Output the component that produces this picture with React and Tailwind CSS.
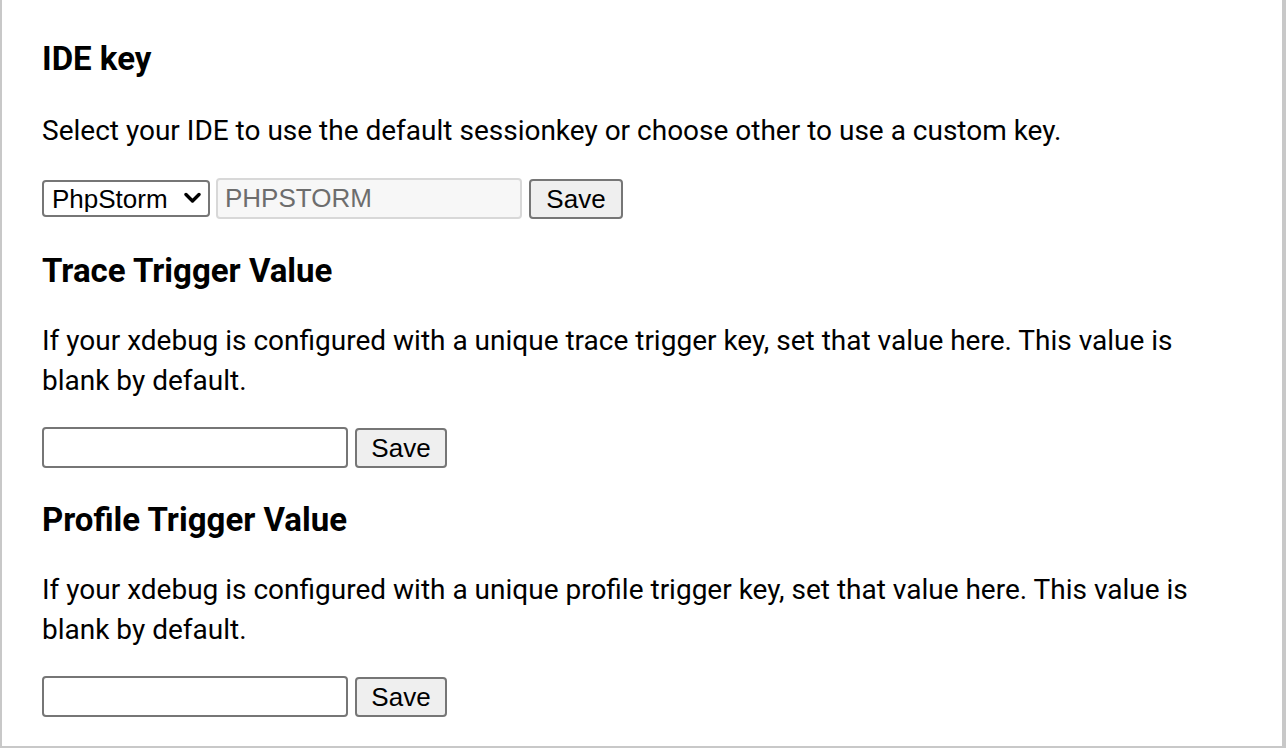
import React, { useState } from "react";

const widget = { fontFamily: '"Liberation Sans", Arial, sans-serif' };

function SaveButton({ w = "w-[94px]" }) {
  return (
    <button
      style={widget}
      className={`${w} h-[40px] rounded-[4px] border-2 border-[#767676] bg-[#efefef] text-[26px] leading-none text-black`}
    >
      Save
    </button>
  );
}

function Section({ title, children, first }) {
  return (
    <section className={first ? "" : "mt-[32px]"}>
      <h3 className="text-[33px] leading-[40px] font-bold text-black">{title}</h3>
      {children}
    </section>
  );
}

export default function App() {
  const [ide, setIde] = useState("PHPSTORM");
  const [trace, setTrace] = useState("");
  const [profile, setProfile] = useState("");

  return (
    <div
      className="min-h-screen bg-white border-l-2 border-r-4 border-b-2 border-[#c8c8c8] pl-[40px] pr-[70px] pt-[39px] text-black"
      style={{ fontFamily: "Roboto, Arial, sans-serif" }}
    >
      <Section title="IDE key" first>
        <p className="mt-[32px] text-[28px] leading-[40px]">
          Select your IDE to use the default sessionkey or choose other to use a custom key.
        </p>
        <div className="mt-[27px] flex items-center">
          <div className="relative">
            <select
              value={ide}
              onChange={(e) => setIde(e.target.value)}
              style={widget}
              className="appearance-none w-[168px] h-[37px] rounded-[4px] border-2 border-[#767676] bg-white pl-[8px] text-[26px] leading-none text-black"
            >
              <option value="PHPSTORM">PhpStorm</option>
              <option value="ECLIPSE">Eclipse</option>
              <option value="netbeans-xdebug">NetBeans</option>
              <option value="macgdbp">MacGDBp</option>
              <option value="other">Other</option>
            </select>
            <svg
              className="pointer-events-none absolute right-[9px] top-[12px]"
              width="17"
              height="12"
              viewBox="0 0 17 12"
            >
              <path d="M2 2.5l6.5 6.5 6.5-6.5" fill="none" stroke="#000" strokeWidth="3.4" strokeLinecap="round" strokeLinejoin="round" />
            </svg>
          </div>
          <input
            disabled
            value={ide}
            readOnly
            style={widget}
            className="ml-[6px] w-[306px] h-[41px] rounded-[4px] border-2 border-[#d8d8d8] bg-[#f7f7f7] px-[7px] text-[26px] text-[#6d6d6d]"
          />
          <div className="ml-[7px]">
            <SaveButton w="w-[94px]" />
          </div>
        </div>
      </Section>

      <Section title="Trace Trigger Value">
        <p className="mt-[30px] text-[28px] leading-[40px]">
          If your xdebug is configured with a unique trace trigger key, set that value here. This value is blank by default.
        </p>
        <div className="mt-[26px] flex items-center">
          <input
            value={trace}
            onChange={(e) => setTrace(e.target.value)}
            style={widget}
            className="w-[306px] h-[41px] rounded-[4px] border-2 border-[#767676] bg-white px-[7px] text-[26px]"
          />
          <div className="ml-[7px]">
            <SaveButton w="w-[92px]" />
          </div>
        </div>
      </Section>

      <Section title="Profile Trigger Value">
        <p className="mt-[30px] text-[28px] leading-[40px]">
          If your xdebug is configured with a unique profile trigger key, set that value here. This value is blank by default.
        </p>
        <div className="mt-[26px] flex items-center">
          <input
            value={profile}
            onChange={(e) => setProfile(e.target.value)}
            style={widget}
            className="w-[306px] h-[41px] rounded-[4px] border-2 border-[#767676] bg-white px-[7px] text-[26px]"
          />
          <div className="ml-[7px]">
            <SaveButton w="w-[92px]" />
          </div>
        </div>
      </Section>
    </div>
  );
}
